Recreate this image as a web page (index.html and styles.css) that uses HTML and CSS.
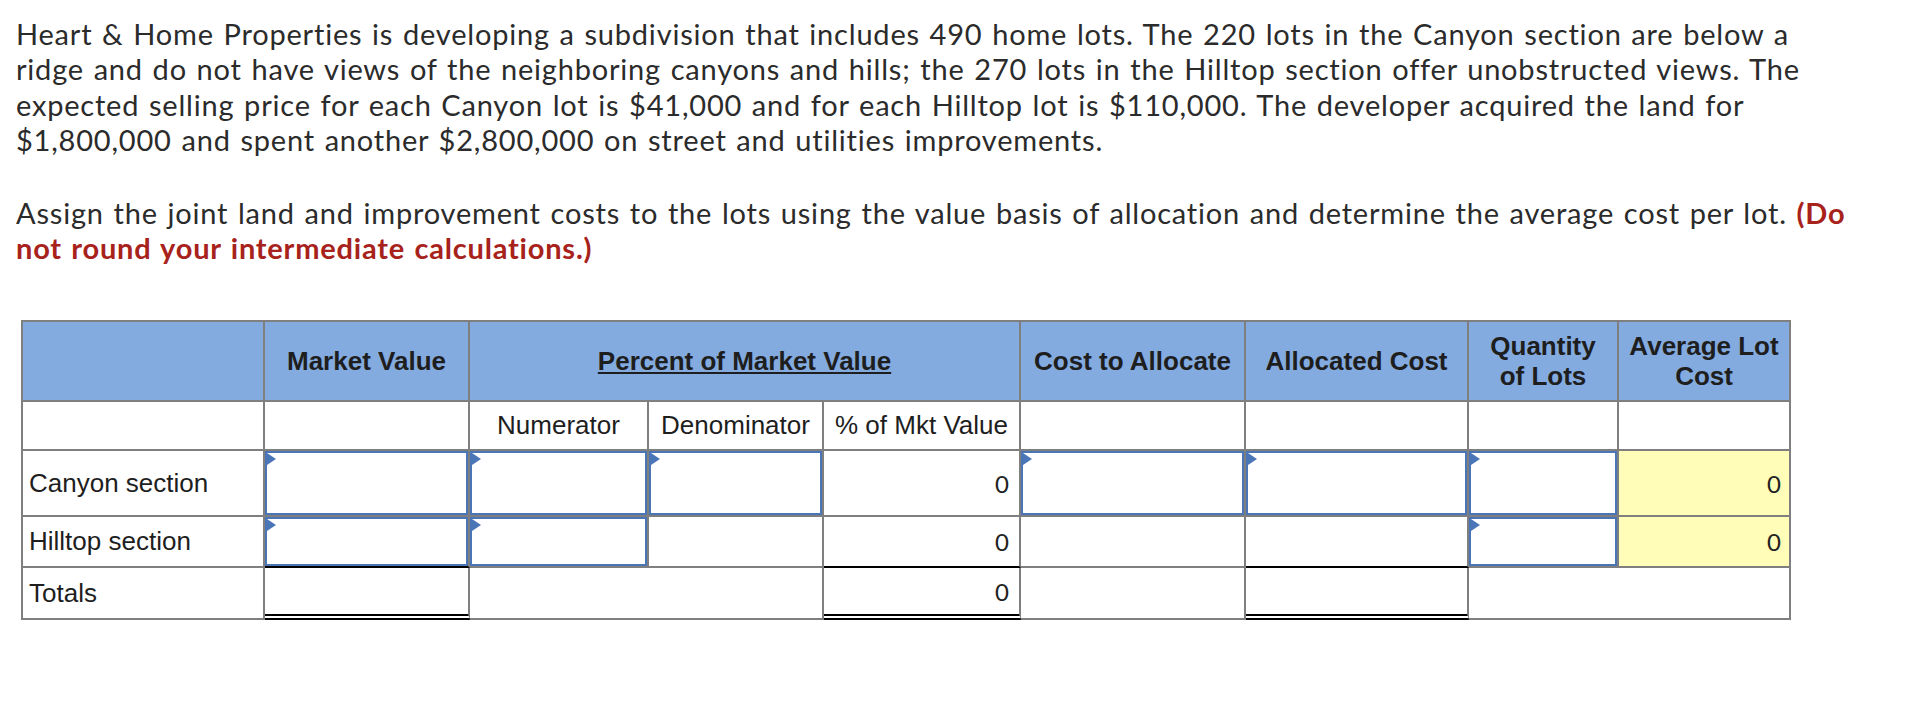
FILE: index.html
```html
<!DOCTYPE html>
<html lang="en">
<head>
<meta charset="utf-8">
<title>Joint cost allocation</title>
<link rel="stylesheet" href="styles.css">
</head>
<body>
<main class="page">
  <p class="prob">Heart &amp; Home Properties is developing a subdivision that includes 490 home lots. The 220 lots in the Canyon section are below a<br>ridge and do not have views of the neighboring canyons and hills; the 270 lots in the Hilltop section offer unobstructed views. The<br>expected selling price for each Canyon lot is $41,000 and for each Hilltop lot is $110,000. The developer acquired the land for<br>$1,800,000 and spent another $2,800,000 on street and utilities improvements.</p>
  <p class="prob task">Assign the joint land and improvement costs to the lots using the value basis of allocation and determine the average cost per lot. <strong class="note">(Do<br>not round your intermediate calculations.)</strong></p>

  <table class="alloc">
    <colgroup>
      <col class="w-label">
      <col class="w-mv">
      <col class="w-num">
      <col class="w-den">
      <col class="w-pct">
      <col class="w-cta">
      <col class="w-ac">
      <col class="w-qty">
      <col class="w-avg">
    </colgroup>
    <tr class="r-head">
      <th></th>
      <th>Market Value</th>
      <th colspan="3"><u>Percent of Market Value</u></th>
      <th>Cost to Allocate</th>
      <th>Allocated Cost</th>
      <th>Quantity<br>of Lots</th>
      <th>Average Lot<br>Cost</th>
    </tr>
    <tr class="r-sub">
      <td></td>
      <td></td>
      <td class="ctr">Numerator</td>
      <td class="ctr">Denominator</td>
      <td class="ctr">% of Mkt Value</td>
      <td></td>
      <td></td>
      <td></td>
      <td></td>
    </tr>
    <tr class="r-canyon">
      <td class="lbl">Canyon section</td>
      <td class="in"><input type="text" aria-label="Canyon market value"></td>
      <td class="in"><input type="text" aria-label="Canyon numerator"></td>
      <td class="in"><input type="text" aria-label="Canyon denominator"></td>
      <td class="num">0</td>
      <td class="in"><input type="text" aria-label="Canyon cost to allocate"></td>
      <td class="in"><input type="text" aria-label="Canyon allocated cost"></td>
      <td class="in"><input type="text" aria-label="Canyon quantity of lots"></td>
      <td class="num calc">0</td>
    </tr>
    <tr class="r-hill">
      <td class="lbl">Hilltop section</td>
      <td class="in sum-top"><input type="text" aria-label="Hilltop market value"></td>
      <td class="in"><input type="text" aria-label="Hilltop numerator"></td>
      <td></td>
      <td class="num sum-top">0</td>
      <td></td>
      <td class="sum-top"></td>
      <td class="in"><input type="text" aria-label="Hilltop quantity of lots"></td>
      <td class="num calc">0</td>
    </tr>
    <tr class="r-tot">
      <td class="lbl">Totals</td>
      <td class="total"></td>
      <td colspan="2"></td>
      <td class="num total">0</td>
      <td></td>
      <td class="total"></td>
      <td colspan="2"></td>
    </tr>
  </table>
</main>
</body>
</html>
```

FILE: styles.css
```css
html, body {
  margin: 0;
  padding: 0;
  background: #ffffff;
}

.page {
  padding: 16px 0 0 16px;
}

.prob {
  margin: 0;
  font-family: Lato, "Open Sans", sans-serif;
  font-size: 29px;
  line-height: 35.4px;
  letter-spacing: 0.8px;
  word-spacing: 1.5px;
  color: #2b2b2b;
  white-space: nowrap;
}

.task {
  margin-top: 37px;
}

.note {
  color: #a8221c;
  font-weight: 700;
}

.alloc {
  margin: 55px 0 0 5px;
  border-collapse: separate;
  border-spacing: 0;
  table-layout: fixed;
  width: 1770px;
  border-top: 2px solid #7f7f7f;
  border-left: 2px solid #7f7f7f;
  font-family: "Liberation Sans", Arial, sans-serif;
  font-size: 26px;
  color: #1e1e1e;
}

.w-label { width: 242px; }
.w-mv    { width: 205px; }
.w-num   { width: 179px; }
.w-den   { width: 175px; }
.w-pct   { width: 197px; }
.w-cta   { width: 225px; }
.w-ac    { width: 223px; }
.w-qty   { width: 150px; }
.w-avg   { width: 172px; }

.alloc th,
.alloc td {
  box-sizing: border-box;
  padding: 0;
  border-right: 2px solid #7f7f7f;
  border-bottom: 2px solid #7f7f7f;
  vertical-align: middle;
}

.alloc th {
  background: #83abe0;
  font-weight: 700;
  text-align: center;
  line-height: 1.19;
  padding: 0 4px;
}

.r-head th { height: 80px; }
.r-sub td { height: 49px; }
.r-canyon td { height: 66px; }
.r-hill td { height: 51px; }
.r-tot td { height: 52px; }

.ctr {
  text-align: center;
  white-space: nowrap;
}

.lbl {
  text-align: left;
  padding-left: 6px !important;
  white-space: nowrap;
}

.num {
  text-align: right;
  padding-right: 10px !important;
  font-family: Lato, "Open Sans", sans-serif;
  font-size: 24px;
  color: #222222;
}

.calc {
  background: #fffdb8;
  padding-right: 8px !important;
}

.in {
  position: relative;
}

.in input {
  display: block;
  box-sizing: border-box;
  width: 100%;
  margin: 0;
  padding: 0 6px;
  border: 2px solid #4a76b8;
  border-radius: 0;
  background: #ffffff;
  font: inherit;
  outline: none;
}

.r-canyon .in input { height: 64px; }
.r-hill .in input { height: 49px; }

.in::after {
  content: "";
  position: absolute;
  left: 2px;
  top: 2px;
  width: 0;
  height: 0;
  border-left: 9px solid #4a76b8;
  border-top: 6px solid transparent;
  border-bottom: 6px solid transparent;
}

.alloc td.sum-top {
  border-bottom: 2px solid #000000;
}

.alloc td.total {
  border-bottom: 6px double #000000;
}
```
